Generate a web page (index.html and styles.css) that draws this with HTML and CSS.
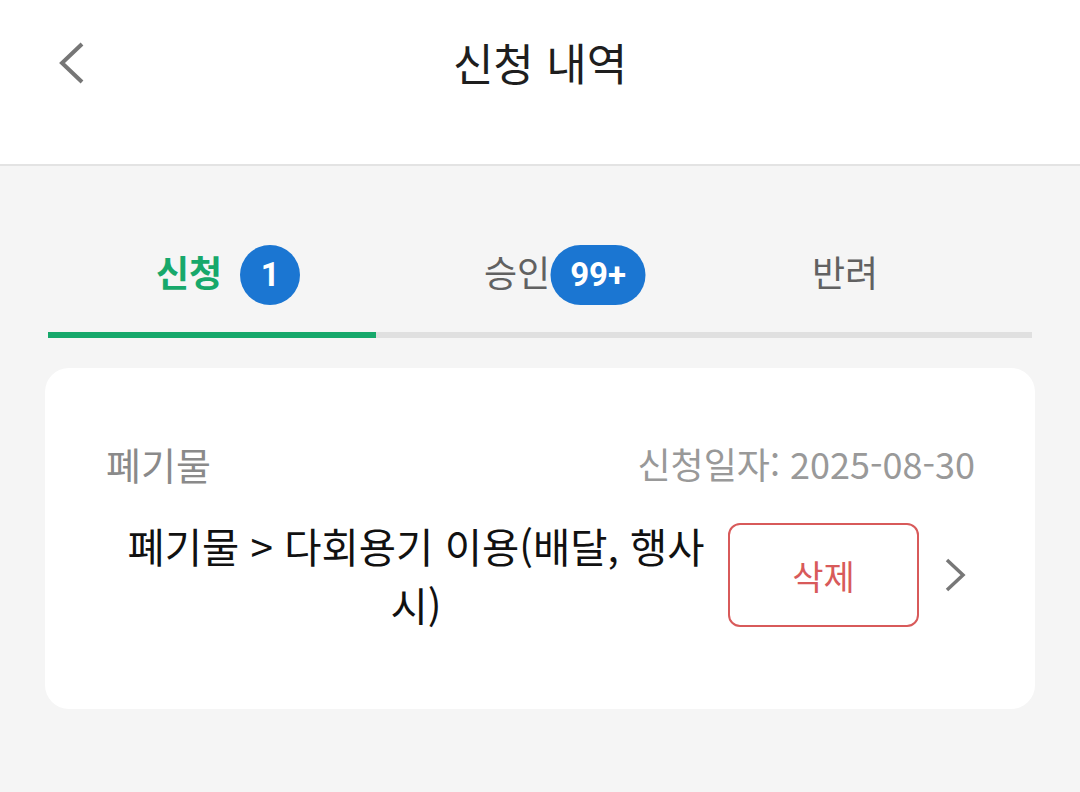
FILE: index.html
```html
<!DOCTYPE html>
<html lang="ko">
<head>
<meta charset="utf-8">
<title>신청 내역</title>
<link rel="stylesheet" href="styles.css">
</head>
<body>
<header class="appbar">
  <button class="back" aria-label="뒤로">
    <svg width="30" height="44" viewBox="0 0 30 44"><path d="M26 3 L6 22 L26 41" fill="none" stroke="#767676" stroke-width="4" stroke-linejoin="miter"/></svg>
  </button>
  <h1 class="title">신청 내역</h1>
</header>
<main class="content">
  <nav class="tabs">
    <div class="tab active"><span class="label">신청<span class="badge round">1</span></span></div>
    <div class="tab"><span class="label">승인<span class="badge pill">99+</span></span></div>
    <div class="tab"><span class="label">반려</span></div>
  </nav>
  <div class="track"><div class="indicator"></div></div>
  <section class="card">
    <div class="card-top">
      <span class="category">폐기물</span>
      <span class="date">신청일자: 2025-08-30</span>
    </div>
    <div class="card-main">
      <p class="item">폐기물 &gt; 다회용기 이용(배달, 행사 시)</p>
      <button class="delete">삭제</button>
      <svg class="chev" width="24" height="36" viewBox="0 0 24 36"><path d="M4 3 L20 18 L4 33" fill="none" stroke="#777" stroke-width="3.5"/></svg>
    </div>
  </section>
</main>
</body>
</html>
```

FILE: styles.css
```css
* { box-sizing: border-box; }
html, body { margin: 0; padding: 0; }
body {
  width: 1080px;
  height: 792px;
  overflow: hidden;
  background: #f5f5f5;
  font-family: "Noto Sans CJK KR", "Noto Sans", sans-serif;
  color: #222;
}
.appbar {
  position: relative;
  height: 166px;
  background: #fff;
  border-bottom: 2px solid #e3e3e3;
  display: flex;
  justify-content: center;
}
.back {
  position: absolute;
  left: 54px;
  top: 41px;
  border: 0;
  background: none;
  padding: 0;
  width: 34px;
  height: 44px;
}
.title {
  margin: 0;
  margin-top: 30px;
  font-size: 44px;
  font-weight: 400;
  line-height: 64px;
  height: 64px;
  color: #1e1e1e;
}
.content { padding: 0 48px; }
.tabs {
  display: flex;
  padding-top: 64px;
  height: 166px;
}
.tab {
  flex: 1;
  height: 102px;
  display: flex;
  align-items: center;
  justify-content: center;
  padding-right: 46px;
  padding-bottom: 20px;
  font-size: 36px;
  color: #616161;
}
.tab.active { color: #17a86b; font-weight: 700; }
.label { position: relative; line-height: 50px; }
.badge {
  position: absolute;
  top: -1px;
  left: calc(100% + 48px);
  transform: translateX(-50%);
  height: 60px;
  border-radius: 30px;
  background: #1b76d2;
  color: #fff;
  font-family: "Roboto", "Noto Sans", sans-serif;
  font-weight: 700;
  font-size: 33px;
  line-height: 60px;
  text-align: center;
}
.badge.round { width: 60px; }
.badge.pill { width: 95px; }
.track {
  height: 6px;
  background: #e0e0e0;
  display: flex;
}
.indicator { width: 328px; background: #17a86b; }
.card {
  margin: 30px -3px 0 -3px;
  height: 341px;
  background: #fff;
  border-radius: 24px;
  padding: 70px 60px 0 61px;
}
.card-top {
  display: flex;
  justify-content: space-between;
  align-items: center;
  height: 50px;
  color: #8a8a8a;
}
.category { font-size: 38px; }
.date { font-size: 36px; color: #999; }
.card-main {
  margin-top: 28px;
  display: flex;
  align-items: center;
}
.item {
  flex: 1;
  margin: 0;
  padding-left: 16px;
  text-align: center;
  font-size: 40.5px;
  line-height: 59px;
  color: #111;
}
.delete {
  width: 191px;
  height: 104px;
  margin-left: 18px;
  border: 2.5px solid #d85a5a;
  border-radius: 12px;
  background: #fff;
  color: #d85a5a;
  font-family: inherit;
  font-size: 34px;
}
.chev { margin-left: 24px; margin-right: 8px; }
```
